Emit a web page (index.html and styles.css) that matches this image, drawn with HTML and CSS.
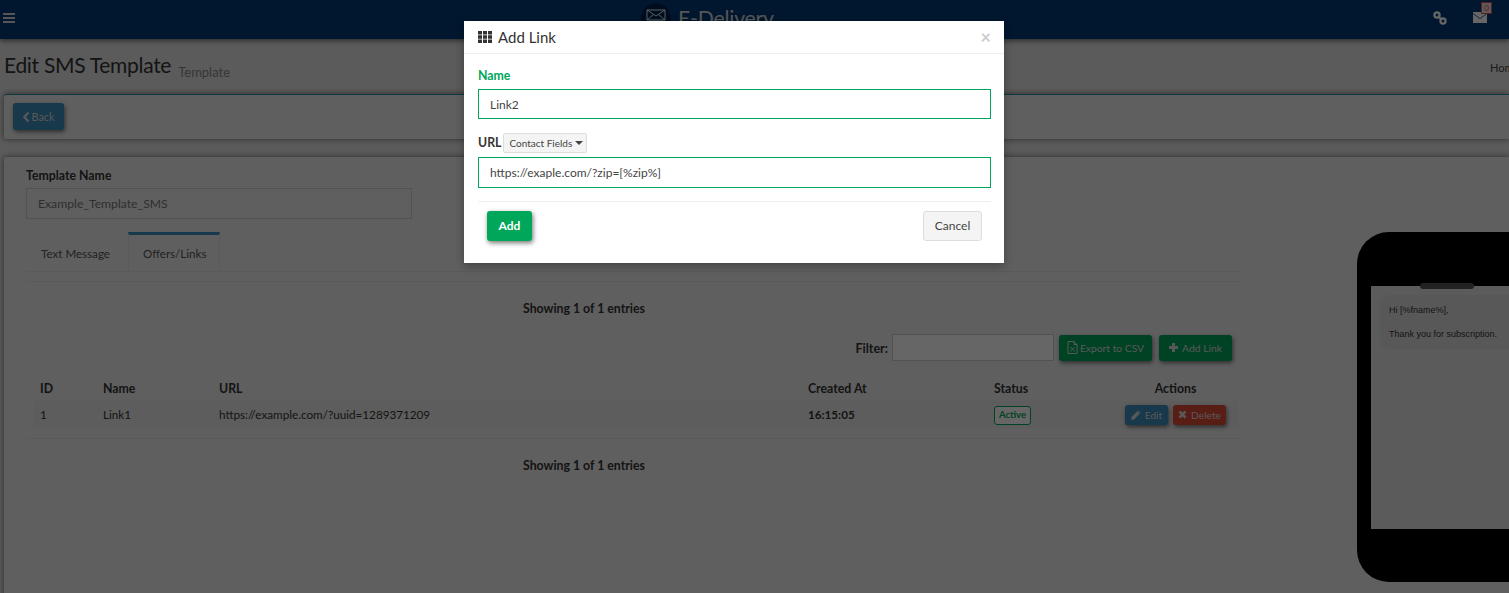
FILE: index.html
```html
<!DOCTYPE html>
<html lang="en">
<head>
<meta charset="utf-8">
<title>Edit SMS Template</title>
<link rel="stylesheet" href="styles.css">
</head>
<body>
<div class="page">
  <header class="navbar">
    <svg class="burger" viewBox="0 0 12 10" width="12" height="10"><path d="M0 0h12v2H0zM0 4h12v2H0zM0 8h12v2H0z"/></svg>
    <div class="brand">
      <span class="brand-disc">
        <svg viewBox="0 0 20 20" width="20" height="20"><path d="M1 2h18v10H1zM1 2l9 6 9-6M1 12l6-5M19 12l-6-5M1 15h18M1 18h18" fill="none" stroke="#7d8790" stroke-width="1"/></svg>
      </span>
      <span class="brand-name">E-Delivery</span>
    </div>
    <div class="nav-icons">
      <svg class="nav-link" viewBox="0 0 14 14" width="14" height="14"><g fill="none" stroke="#8f9aa5" stroke-width="2.2"><circle cx="4" cy="4" r="2.6"/><circle cx="10" cy="10" r="2.6"/><path d="M5 5l4 4"/></g></svg>
      <span class="nav-mail">
        <svg viewBox="0 0 14 11" width="14" height="11"><path d="M0 0h14v11H0z" fill="#8f9aa5"/><path d="M0 1.5l7 5 7-5" fill="none" stroke="#00182f" stroke-width="1"/></svg>
        <span class="mail-badge">0</span>
      </span>
    </div>
  </header>

  <div class="page-head">
    <h1 class="page-title">Edit SMS Template <small class="page-sub">Template</small></h1>
    <span class="crumb">Home</span>
  </div>

  <section class="box box-back">
    <button class="btn btn-blue btn-back"><svg viewBox="0 0 7 10" width="7" height="10"><path d="M5.5 0.5L1.2 5l4.3 4.5" fill="none" stroke="currentColor" stroke-width="2.2"/></svg>Back</button>
  </section>

  <section class="box box-main">
    <label class="field-label">Template Name</label>
    <div class="fake-input tpl-input">Example_Template_SMS</div>

    <nav class="tabs">
      <span class="tab">Text Message</span>
      <span class="tab tab-active">Offers/Links</span>
    </nav>
    <div class="tab-rule"></div>

    <p class="showing">Showing 1 of 1 entries</p>

    <div class="toolbar">
      <strong class="filter-label">Filter:</strong>
      <div class="fake-input filter-input"></div>
      <button class="btn btn-green btn-csv"><svg viewBox="0 0 11 13" width="11" height="13"><path d="M1 .5h6l3 3v9H1z M7 .5v3h3" fill="none" stroke="currentColor"/><path d="M3.5 6l4 4.5M7.5 6l-4 4.5" stroke="currentColor" fill="none"/></svg>Export to CSV</button>
      <button class="btn btn-green btn-add"><svg viewBox="0 0 9 9" width="9" height="9"><path d="M3 0h3v3h3v3H6v3H3V6H0V3h3z" fill="currentColor"/></svg>Add Link</button>
    </div>

    <table class="grid">
      <colgroup>
        <col class="c-id"><col class="c-name"><col class="c-url"><col class="c-date"><col class="c-status"><col class="c-act">
      </colgroup>
      <thead>
        <tr><th>ID</th><th>Name</th><th>URL</th><th>Created At</th><th>Status</th><th class="th-act">Actions</th></tr>
      </thead>
      <tbody>
        <tr>
          <td class="cell-text">1</td><td class="cell-text">Link1</td><td class="cell-text">https://example.com/?uuid=1289371209</td>
          <td class="cell-text strong">16:15:05</td>
          <td class="cell-status"><span class="status">Active</span></td>
          <td class="td-act">
            <button class="btn-sm btn-blue"><svg viewBox="0 0 10 10" width="10" height="10"><path d="M0 10l.6-3L6.500 1 9 3.500 3 9.400z M7.300.3l.4-.3L10 2.300l-.3.4z" fill="currentColor"/></svg>Edit</button>
            <button class="btn-sm btn-red"><svg viewBox="0 0 9 9" width="9" height="9"><path d="M1.500 1.500l6 6M7.500 1.500l-6 6" stroke="currentColor" stroke-width="2.600" fill="none"/></svg>Delete</button>
          </td>
        </tr>
      </tbody>
    </table>
    <div class="table-rule"></div>
    <p class="showing showing-foot">Showing 1 of 1 entries</p>
  </section>

  <aside class="phone">
    <div class="phone-screen">
      <span class="phone-speaker"></span>
      <div class="bubble">
        <p>Hi [%fname%],</p>
        <p>Thank you for subscription.</p>
      </div>
    </div>
  </aside>
</div>

<div class="backdrop"></div>

<div class="modal">
  <div class="modal-head">
    <svg viewBox="0 0 14 12" width="14" height="12"><path d="M0 0h4v3.400H0zM5 0h4v3.400H5zM10 0h4v3.400h-4zM0 4.300h4v3.400H0zM5 4.300h4v3.400H5zM10 4.300h4v3.400h-4zM0 8.600h4V12H0zM5 8.600h4V12H5zM10 8.600h4V12h-4z" fill="#333"/></svg>
    <span class="modal-title">Add Link</span>
    <span class="modal-close">×</span>
  </div>
  <div class="modal-body">
    <label class="modal-label label-ok">Name</label>
    <div class="fake-input modal-input">Link2</div>
    <div class="url-row">
      <label class="modal-label">URL</label>
      <span class="drop">Contact Fields<i class="caret"></i></span>
    </div>
    <div class="fake-input modal-input modal-input-url">https://exaple.com/?zip=[%zip%]</div>
  </div>
  <div class="modal-foot">
    <button class="btn btn-add-link">Add</button>
    <button class="btn btn-cancel">Cancel</button>
  </div>
</div>
</body>
</html>
```

FILE: styles.css
```css
* { box-sizing: border-box; }
html, body { margin: 0; height: 100%; overflow: hidden; }
body {
  font-family: "Lato", "Noto Sans", sans-serif;
  font-size: 12.200px;
  color: #333;
  background: #e4e4e4;
  width: 1509px;
  height: 593px;
  position: relative;
}
.page { height: 593px; overflow: hidden; position: relative; }
p { margin: 0; }

.navbar {
  height: 39px;
  background: #003b77;
  display: flex;
  align-items: center;
  padding: 0 17px 4px 3px;
  position: relative;
  box-shadow: 0 2px 5px rgba(0,0,0,.5);
}
.burger { fill: #d8d8d8; }
.brand { position: absolute; left: 641px; top: 0; display: flex; align-items: center; gap: 7px; }
.brand-disc { width: 30px; height: 30px; border-radius: 50%; background: #00224a; display: flex; align-items: center; justify-content: center; margin-top: 3px; }
.brand-disc svg { filter: brightness(1.800); }
.brand-name { font-size: 21.200px; letter-spacing: -.2px; color: #d8d8d8; margin-top: 3px; }
.nav-icons { margin-left: auto; display: flex; align-items: center; gap: 26px; }
.nav-link, .nav-mail svg { filter: brightness(2.200); }
.nav-mail { position: relative; display: flex; margin-right: 5px; }
.mail-badge {
  position: absolute; left: 8px; top: -10px; width: 11px; height: 12px;
  background: #f2dede; border: 1px solid #d9534f; color: #d9534f;
  font-size: 8px; line-height: 10px; text-align: center;
}

.page-head { height: 55px; display: flex; align-items: flex-start; padding: 13px 0 0 4px; position: relative; }
.page-title { margin: 0; font-size: 21px; font-weight: 400; color: #333; line-height: 25px; letter-spacing: -.3px; }
.page-sub { font-size: 13px; color: #888; margin-left: 2px; font-weight: 400; letter-spacing: 0; vertical-align: -4px; }
.crumb { position: absolute; left: 1490px; top: 22px; font-size: 11px; color: #444; }

.box {
  background: #ededed;
  margin-left: 4px;
  border-top: 1px solid #2e8fb0;
  border-radius: 3px 0 0 3px;
  box-shadow: 0 0 6px rgba(0,0,0,.55);
}
.box-back { height: 45px; padding: 8px 9px; margin-bottom: 18px; }
.box-main { height: 460px; padding: 12px 22px; border-top: 0; position: relative; }

.btn {
  border: 0; font: inherit; border-radius: 3px; display: inline-flex; align-items: center; justify-content: center;
  gap: 2px; padding: 0;
}
.btn-blue { background: #3c8dbc; color: #ddd; }
.btn-green { background: #00a65a; color: #ddd; font-size: 10.300px; }
.btn-red { background: #dd4b39; color: #ddd; }
.btn-back { width: 51px; height: 27px; font-size: 10.800px; box-shadow: 1px 2px 4px rgba(0,0,0,.5); }

.field-label { display: block; font-weight: 700; line-height: 14px; margin-bottom: 5px; font-size: 12.300px; }
.fake-input { border: 1px solid #d2d6de; background: #fff; }
.tpl-input {
  width: 386px; height: 31px; padding: 0 11px; background: #ededed; line-height: 29px; color: #777; border-color: #ccc;
}

.tabs { display: flex; margin-top: 13px; height: 39px; }
.tab { width: 102px; padding: 15px 0 0 15px; font-size: 11.600px; color: #555; line-height: 14px; }
.tab-active { width: 92px; border-top: 3px solid #3c8dbc; border-left: 1px solid #e2e2e2; border-right: 1px solid #e2e2e2; padding: 12px 0 0 14px; }
.tab-rule { width: 1214px; height: 11px; border-top: 1px solid #e2e2e2; border-bottom: 1px solid #e2e2e2; }

.showing { width: 1116px; text-align: center; font-weight: 700; line-height: 14px; padding-top: 20px; height: 34px; font-size: 12.300px; }
.toolbar { width: 1206px; display: flex; justify-content: flex-end; align-items: center; height: 27px; margin-top: 18px; }
.filter-label { font-size: 12.500px; margin-right: 4px; padding-top: 2px; }
.filter-input { width: 162px; height: 27px; margin-right: 5px; border-color: #ccc; }
.btn-csv { width: 93px; height: 26px; margin-right: 7px; box-shadow: 1px 2px 4px rgba(0,0,0,.5); }
.btn-add { width: 73px; height: 26px; gap: 4px; box-shadow: 1px 2px 4px rgba(0,0,0,.5); }

.grid { border-collapse: collapse; table-layout: fixed; width: 1204px; margin: 14px 0 0 8px; font-size: 11.700px; }
.c-id { width: 63px; } .c-name { width: 116px; } .c-url { width: 589px; } .c-date { width: 186px; } .c-status { width: 125px; } .c-act { width: 125px; }
.grid th, .grid td { text-align: left; padding: 0 6px; }
.grid th { height: 26px; font-weight: 700; font-size: 12.300px; }
.grid td { height: 27px; background: #e9e9e9; }
.grid td.cell-text { padding-bottom: 2px; }
.grid td.cell-status { padding-top: 2px; }
.grid td.strong { font-weight: 700; }
.grid .th-act { text-align: center; }
.grid .td-act { text-align: center; padding: 0; white-space: nowrap; }
.status {
  display: inline-block; width: 37px; height: 19px; line-height: 16px; text-align: center; font-size: 9.500px; font-weight: 700;
  color: #00a65a; border: 1px solid #00a65a; border-radius: 3px; background: #fff;
}
.btn-sm {
  border: 0; border-radius: 3px; font: inherit; font-size: 10.200px; height: 20px; padding: 0; display: inline-flex; align-items: center; justify-content: center; gap: 4px;
  box-shadow: 1px 2px 4px rgba(0,0,0,.5); vertical-align: middle;
}
.btn-sm.btn-blue { width: 43px; margin-right: 2px; }
.btn-sm.btn-red { width: 53px; }
.table-rule { width: 1214px; height: 0; border-top: 1px solid #e2e2e2; margin-top: 10px; }
.showing-foot { padding-top: 20px; }

.phone {
  position: absolute; left: 1357px; top: 232px; width: 300px; height: 350px;
  background: #000; border-radius: 32px; padding: 54px 14px 53px;
}
.phone-screen { height: 243px; background: #e4e4e4; position: relative; padding: 9px; }
.phone-speaker { position: absolute; left: 49px; top: -3px; width: 54px; height: 6px; border-radius: 3px; background: #555; }
.bubble { width: 300px; height: 54px; background: #ddd; border-radius: 8px; padding: 9px 9px; font-family: "Liberation Sans", sans-serif; font-size: 9px; color: #333; line-height: 12px; }
.bubble p + p { margin-top: 12px; }

.backdrop { position: absolute; inset: 0; background: rgba(0,0,0,.6); }

.modal {
  position: absolute; left: 464px; top: 21px; width: 540px; height: 242px; background: #fff;
  box-shadow: 0 3px 9px rgba(0,0,0,.3);
}
.modal-head { height: 33px; border-bottom: 1px solid #eee; display: flex; align-items: center; padding: 0 14px 1px; gap: 6px; }
.modal-title { font-size: 15px; color: #333; }
.modal-close { margin-left: auto; margin-right: -1px; font-size: 18px; font-weight: 700; color: #ccc; line-height: 1; }
.modal-body { padding: 15px 13px 0 14px; height: 147px; }
.modal-label { display: block; font-weight: 700; font-size: 12.300px; line-height: 14px; }
.label-ok { color: #00a65a; margin-bottom: 6px; }
.modal-input { height: 30px; border-color: #00a65a; padding: 0 11px; line-height: 29px; font-size: 12px; color: #444; }
.modal-input-url { height: 31px; line-height: 30px; }
.url-row { display: flex; align-items: center; gap: 2px; margin-top: 14px; height: 20px; margin-bottom: 4px; }
.drop {
  width: 84px; height: 20px; border: 1px solid #ddd; background: #f4f4f4; border-radius: 2px; font-size: 10px; color: #444;
  display: flex; align-items: center; padding-left: 5px; gap: 3px;
}
.caret { width: 0; height: 0; border-left: 4px solid transparent; border-right: 4px solid transparent; border-top: 4px solid #444; }
.modal-foot {
  margin: 0 13px 0 14px; border-top: 1px solid #eee; padding: 9px 9px 0 9px; display: flex; justify-content: space-between;
}
.btn-add-link { width: 45px; height: 30px; padding-bottom: 2px; background: #00a65a; color: #fff; font-weight: 700; font-size: 12px; box-shadow: 1px 2px 5px rgba(0,0,0,.55); }
.btn-cancel { width: 59px; height: 30px; padding-bottom: 2px; background: #f4f4f4; border: 1px solid #ddd; color: #444; font-size: 12px; }
```
